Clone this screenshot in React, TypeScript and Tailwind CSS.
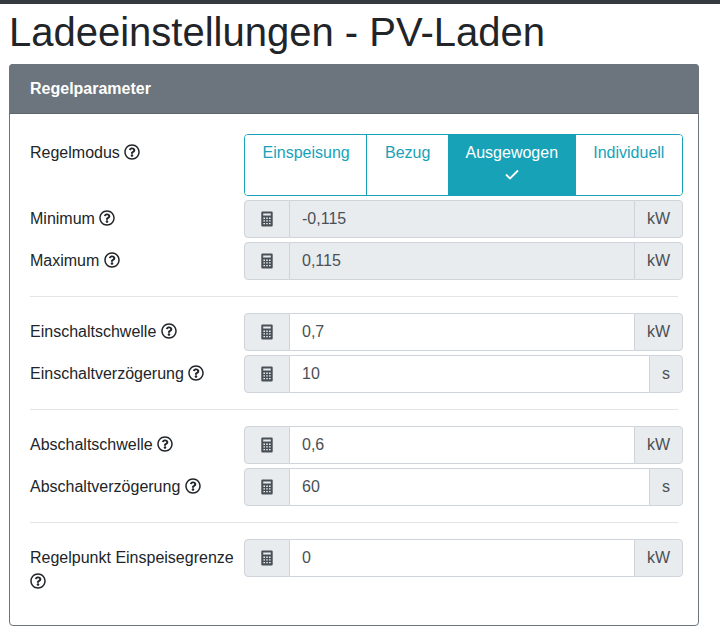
import { FaRegQuestionCircle } from "react-icons/fa";

const MODES = [
  { label: "Einspeisung", active: false },
  { label: "Bezug", active: false },
  { label: "Ausgewogen", active: true },
  { label: "Individuell", active: false },
];

function CalculatorIcon() {
  return (
    <svg viewBox="0 0 12 16" className="h-4 w-3" fill="currentColor">
      <path
        fillRule="evenodd"
        d="M1.3 0.5h9.4a1 1 0 0 1 1 1v13a1 1 0 0 1-1 1H1.3a1 1 0 0 1-1-1v-13a1 1 0 0 1 1-1zM2.2 2.4v2.2h7.6V2.4zM2.4 6.6v1.3h1.6v-1.3zM5.2 6.6v1.3h1.6v-1.3zM8 6.6v1.3h1.6v-1.3zM2.4 9.3v1.3h1.6v-1.3zM5.2 9.3v1.3h1.6v-1.3zM8 9.3v1.3h1.6v-1.3zM2.4 12v1.3h1.6v-1.3zM5.2 12v1.3h1.6v-1.3zM8 12v1.3h1.6v-1.3z"
      />
    </svg>
  );
}

function Label({ text }: { text: string }) {
  return (
    <label className="block pt-[7px] pr-2 text-[16px] leading-[24px] text-[#212529]">
      {text}{" "}
      <FaRegQuestionCircle className="inline-block w-4 h-4 align-[-2px] text-[#212529]" />
    </label>
  );
}

function NumberRow({ label, value, unit, disabled }: { label: string; value: string; unit: string; disabled?: boolean }) {
  return (
    <div className="grid grid-cols-[214px_439px] mb-1">
      <Label text={label} />
      <div className="flex h-[38px] text-[16px] leading-[24px] text-[#495057]">
        <div className="flex w-[46px] shrink-0 items-center justify-center rounded-l-[4px] border border-[#ced4da] bg-[#e9ecef]">
          <CalculatorIcon />
        </div>
        <div className={`flex flex-1 items-center border-y border-[#ced4da] px-3 ${disabled ? "bg-[#e9ecef]" : "bg-white"}`}>
          {value}
        </div>
        <div className="flex shrink-0 items-center rounded-r-[4px] border border-[#ced4da] bg-[#e9ecef] px-3">
          {unit}
        </div>
      </div>
    </div>
  );
}

function Divider() {
  return <hr className="mt-4 mb-4 w-[648px] border-t border-[#e3e4e5]" />;
}

export default function App() {
  return (
    <div className="min-h-[637px] bg-white font-['Liberation_Sans',Arial,sans-serif]">
      <div className="h-1 bg-[#343a40]" />
      <div className="pl-[9px] w-[699px]">
        <h1 className="mt-1 mb-2 text-[40px] leading-[48px] font-normal text-[#212529]">Ladeeinstellungen - PV-Laden</h1>
        <div className="rounded-[4px] border border-[#6c757d]">
          <div className="h-[49px] -mx-px -mt-px box-content border-b border-[#5f666d] bg-[#6c757d] rounded-t-[4px] px-[21px] text-[16px] font-bold leading-[50px] text-white">
            Regelparameter
          </div>
          <div className="px-5 pt-5 pb-[27px]">
            <div className="grid grid-cols-[214px_439px] mb-1">
              <Label text="Regelmodus" />
              <div className="flex h-[62px] overflow-hidden rounded-[4px] border border-[#17a2b8] text-[16px] leading-[24px]">
                {MODES.map((m, i) => (
                  <div
                    key={m.label}
                    className={`flex flex-auto flex-col items-center px-3 pt-[6px] ${i === 1 ? "-ml-px border-l border-[#17a2b8]" : ""} ${m.active ? "bg-[#17a2b8] text-white" : "bg-white text-[#17a2b8]"}`}
                  >
                    <span>{m.label}</span>
                    {m.active && (
                      <svg viewBox="0 0 16 16" className="mt-[1px] h-4 w-4" fill="none" stroke="currentColor" strokeWidth="1.8">
                        <path d="M2 8.5 L6 12.5 L14 4.5" />
                      </svg>
                    )}
                  </div>
                ))}
              </div>
            </div>
            <NumberRow label="Minimum" value="-0,115" unit="kW" disabled />
            <NumberRow label="Maximum" value="0,115" unit="kW" disabled />
            <Divider />
            <NumberRow label="Einschaltschwelle" value="0,7" unit="kW" />
            <NumberRow label="Einschaltverzögerung" value="10" unit="s" />
            <Divider />
            <NumberRow label="Abschaltschwelle" value="0,6" unit="kW" />
            <NumberRow label="Abschaltverzögerung" value="60" unit="s" />
            <Divider />
            <NumberRow label="Regelpunkt Einspeisegrenze" value="0" unit="kW" />
          </div>
        </div>
      </div>
    </div>
  );
}
